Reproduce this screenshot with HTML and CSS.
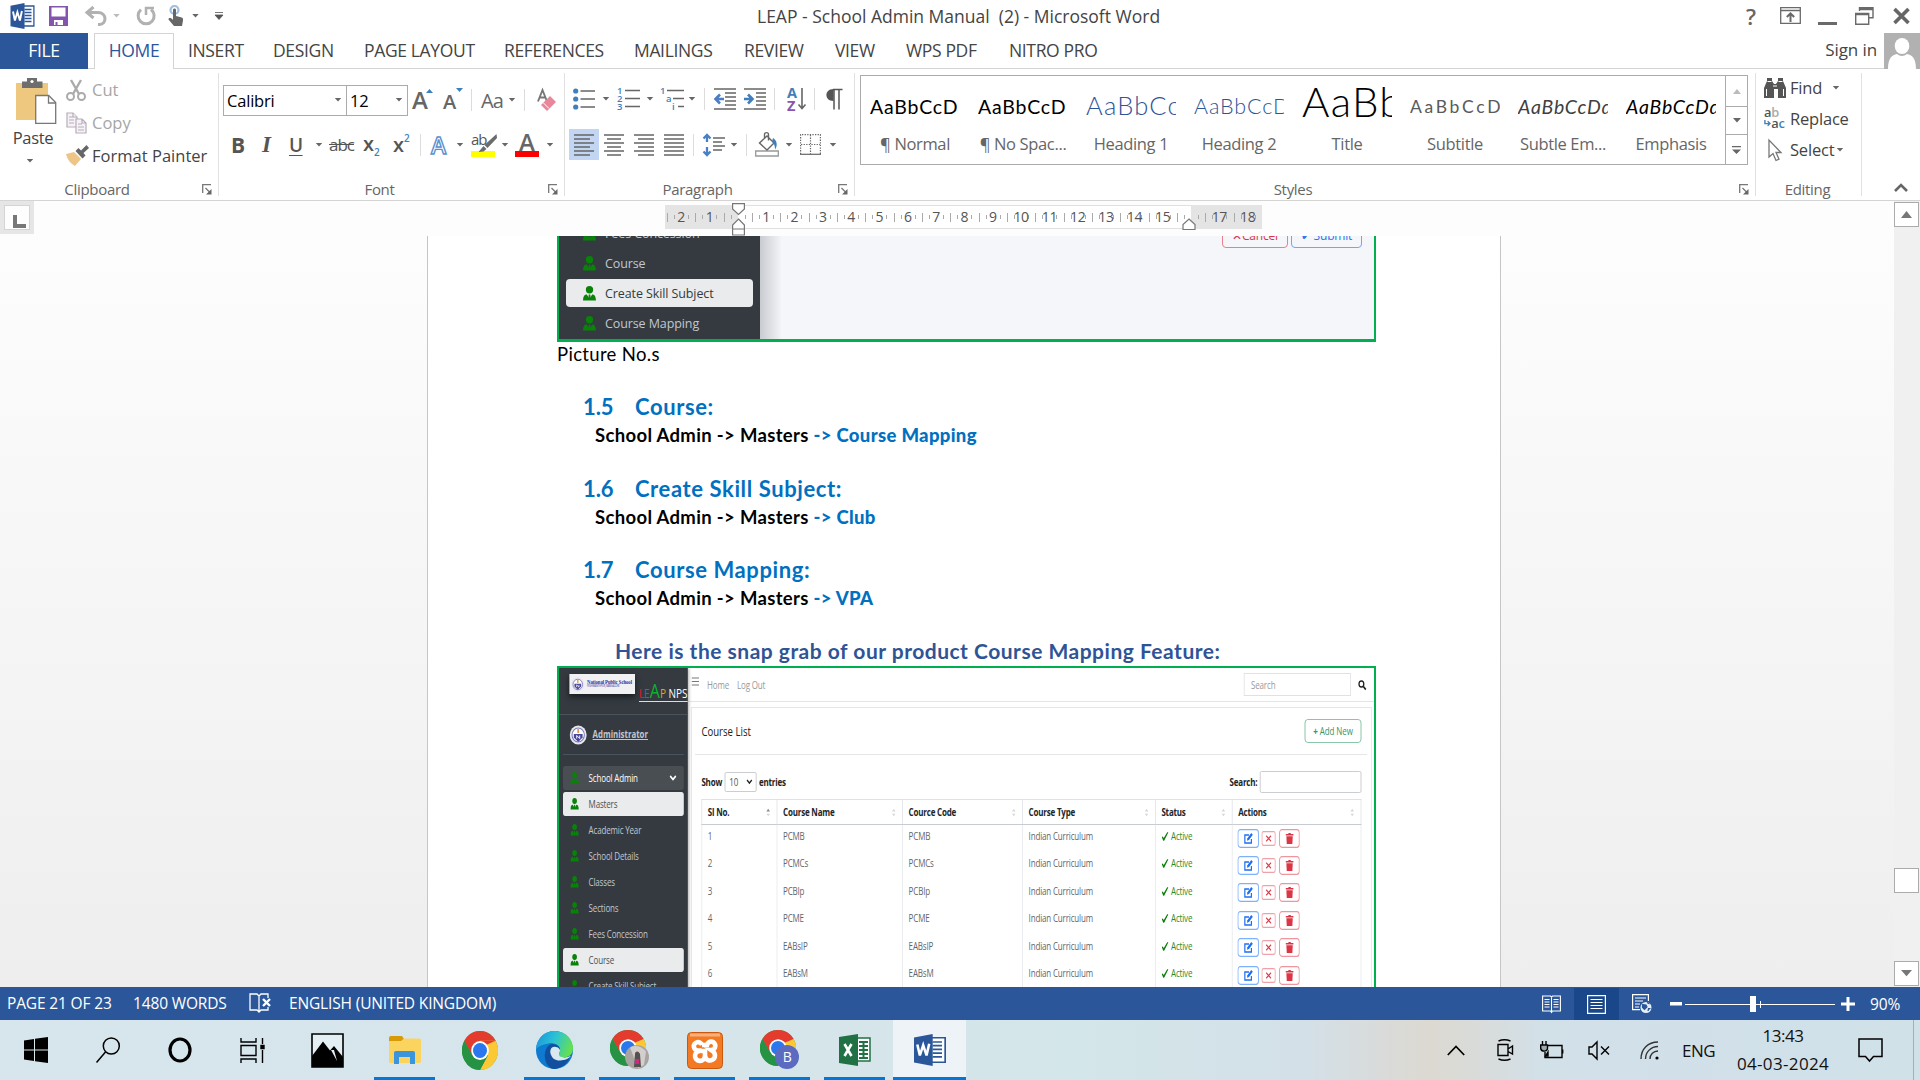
FILE: index.html
```html
<!DOCTYPE html>
<html lang="en">
<head>
<meta charset="utf-8">
<title>LEAP - School Admin Manual (2) - Microsoft Word</title>
<link rel="stylesheet" href="styles.css">
</head>
<body>
<svg class="defs" width="0" height="0" aria-hidden="true">
  <symbol id="caret" viewBox="0 0 8 5"><path d="M0 0h8L4 4.5z"/></symbol>
  <symbol id="launch" viewBox="0 0 10 11"><path d="M.7 9V.7H9M3.5 4l4 4" fill="none" stroke="#777" stroke-width="1.3"/><path d="M9.5 5v5.500h-5.500z" fill="#666"/></symbol>
  <symbol id="user" viewBox="0 0 12 14"><circle cx="6" cy="3.500" r="3.400"/><path d="M0 13.500c0-4 1.500-5.500 3.500-5.500L6 12l2.500-4c2 0 3.500 1.500 3.500 5.500z"/><path d="M5.300 8h1.400l.6 4.500h-2.600z"/></symbol>
  <symbol id="sort" viewBox="0 0 6 12"><path d="M0 4.500 3 1l3 3.500zM0 7.500h6L3 11z"/></symbol>
  <symbol id="word" viewBox="0 0 24 26"><path d="M13 3h10.400v20H13z" fill="#fff" stroke="#2b579a" stroke-width="1.300"/><path d="M14 6.500h7M14 9.500h7M14 12.500h7M14 15.500h7M14 18.500h7" stroke="#2b579a" stroke-width="1.400"/><path d="M0 2.800 14 0v26L0 23.200z" fill="#2b579a"/><path d="m2.500 8.500 1.900 9 2.500-8.500 2.500 8.500 2-9.500" fill="none" stroke="#fff" stroke-width="1.900"/></symbol>
  <symbol id="chrome" viewBox="0 0 36 36"><circle cx="18" cy="18" r="18" fill="#34a046"/><path d="M2.400 9A18 18 0 0 1 33.600 9L18 18 10.200 22.500z" fill="#e33b2e"/><path d="M33.600 9A18 18 0 0 1 18 36L25.800 22.500 18 9z" fill="#fcc934"/><path d="M33.600 9H18l6 4z" fill="#e33b2e"/><path d="M2.400 9A18 18 0 0 0 18 36l7.800-13.500-15.600 0z" fill="#269344"/><circle cx="18" cy="18" r="8.800" fill="#fff"/><circle cx="18" cy="18" r="7" fill="#2b78ee"/></symbol>
  <symbol id="check" viewBox="0 0 10 10"><path d="M.5 5.500 2.200 5l1 2L8 .3l1.700-.1L3.800 9.800H2.600z" fill="#0a7d0a"/></symbol>
  <symbol id="edit" viewBox="0 0 27 19"><rect x=".7" y=".7" width="25.600" height="17.600" rx="3" fill="#fff" stroke="#7fb0fb" stroke-width="1.200"/><path d="M14.500 6H9.300v8h8.200v-4" fill="none" stroke="#1f6ff2" stroke-width="1.500"/><path d="m12 11.700.5-2.500L17.300 4l2 1.700-4.900 5.300z" fill="#1f6ff2"/></symbol>
  <symbol id="cross" viewBox="0 0 18 15"><rect x=".7" y=".7" width="16.600" height="13.600" rx="2" fill="#fff" stroke="#f0a0a8" stroke-width="1.200"/><path d="m6 4.700 6 5.600m0-5.600-6 5.600" stroke="#dc3545" stroke-width="1.200"/></symbol>
  <symbol id="trash" viewBox="0 0 26 19"><rect x=".7" y=".7" width="24.600" height="17.600" rx="3" fill="#fff" stroke="#ee959e" stroke-width="1.200"/><path d="M8.500 5h3l.5-1h2.500l.5 1h3v1.500h-9.500zM9.200 7.200h8l-.5 7.800H9.700z" fill="#dc3545"/></symbol>
  <symbol id="crest" viewBox="0 0 20 20"><circle cx="10" cy="10" r="9.600" fill="#e9e7ee"/><circle cx="10" cy="10" r="7" fill="#fff" stroke="#7b78b8" stroke-width="1.200"/><path d="M5 9h10v3.500L10 17l-5-4.500z" fill="#4a489e"/><path d="M10 4v4" stroke="#d99b4a" stroke-width="2"/><path d="M8.300 13.500v-3l3.400 3v-3" fill="none" stroke="#fff"/></symbol>
</svg>

<header class="titlebar">
  <div class="quick">
    <svg width="25" height="26"><use href="#word"/></svg>
    <svg width="19" height="20" viewBox="0 0 19 20"><path d="M0 0h19v20H0z" fill="#8455ad"/><path d="M2.500 1.500h14v9h-14z" fill="#fff"/><path d="M5 14h9v5H5z" fill="#fff"/><path d="M6.500 16h2v3h-2z" fill="#8455ad"/></svg>
    <svg width="22" height="20" viewBox="0 0 22 20" fill="none" stroke="#b1b1b1" stroke-width="3"><path d="M8.500 1 2 6.500l6.500 5.500M3 6.500h10c9 0 9 12 1.500 12h-1.500"/></svg>
    <svg class="pale" width="7" height="4"><use href="#caret"/></svg>
    <svg width="20" height="20" viewBox="0 0 20 20" fill="none" stroke="#b1b1b1" stroke-width="3"><path d="M15 3.500a8 8 0 1 1-10 .2"/><path d="M10 9V2h8" stroke-width="2.500"/></svg>
    <svg width="16" height="22" viewBox="0 0 16 22"><circle cx="6.500" cy="5" r="4" fill="none" stroke="#9dbfe0" stroke-width="2.200"/><path d="M5 5c0-2 3-2 3 0v6l5 1.200c2 .5 2.300 1.500 2 3.300l-1 5.500H6l-5.500-6.500c0-2 2.500-2 4.500.5z" fill="#666"/></svg>
    <svg class="dark" width="7" height="4"><use href="#caret"/></svg>
    <svg width="8" height="8" viewBox="0 0 8 8"><path d="M0 .5h8M0 3h8L4 7.500z" fill="#555" stroke="#555" stroke-width=".8"/></svg>
  </div>
  <h1 class="wintitle">LEAP - School Admin Manual&nbsp; (2) - Microsoft Word</h1>
  <div class="winbtns">
    <span class="help">?</span>
    <svg width="21" height="17" viewBox="0 0 21 17" fill="none" stroke="#6a6a6a" stroke-width="1.300"><path d="M.7.7h19.600v15.600H.7zM.7 3.500h19.600"/><path d="M10.500 15V7M6.800 10l3.700-3.500 3.700 3.500" stroke-width="2"/></svg>
    <svg width="19" height="20"><path d="M0 16h19v3H0z" fill="#6a6a6a"/></svg>
    <svg width="19" height="18" viewBox="0 0 19 18" fill="none" stroke="#6a6a6a" stroke-width="1.400"><path d="M4.500 4V.8h13.500v10H14"/><path d="M4.500 2h13.500" stroke-width="2.500"/><path d="M.7 6.500h13v10.700H.7zM.7 7.500h13"/></svg>
    <svg width="17" height="16" viewBox="0 0 17 16"><path d="m1.500 1 14 14m0-14-14 14" stroke="#666" stroke-width="3.600"/></svg>
  </div>
</header>

<nav class="tabs">
  <span class="file">FILE</span>
  <span class="home">HOME</span>
  <div class="tablist"><span>INSERT</span><span>DESIGN</span><span>PAGE LAYOUT</span><span>REFERENCES</span><span>MAILINGS</span><span>REVIEW</span><span>VIEW</span><span>WPS PDF</span><span>NITRO PRO</span></div>
  <span class="signin">Sign in</span>
  <svg class="avatar" width="36" height="36" viewBox="0 0 36 36"><path d="M0 0h36v36H0z" fill="#b1b1b1"/><ellipse cx="18" cy="13" rx="7.300" ry="8" fill="#fff"/><path d="M4 36c0-11 4-14 9-15 3 2.500 7 2.500 10 0 5 1 9 4 9 15z" fill="#fff"/></svg>
</nav>

<section class="ribbon">
  <div class="group clip">
    <div class="clipbody">
      <div class="paste">
        <svg width="42" height="46" viewBox="0 0 42 46"><path d="M1 5h32v37H1z" fill="#eec87f"/><path d="M7 3.500h5V0h10v3.500h5.500V10H7z" fill="#6e6e6e"/><circle cx="17" cy="3.500" r="1.600" fill="#fff"/><path d="M20.700 17.500h13l7 7v20.800h-20z" fill="#fff" stroke="#777" stroke-width="1.300"/><path d="M33.500 17.500v7.500h7" fill="none" stroke="#777" stroke-width="1.300"/></svg>
        <span>Paste</span>
        <svg class="car" width="8" height="4"><use href="#caret"/></svg>
      </div>
      <div class="cliplist">
        <span class="off"><svg width="21" height="22" viewBox="0 0 21 22" fill="none" stroke="#ababab" stroke-width="2"><path d="m5 1 8 14M15 1 7 15" stroke-width="2.400"/><circle cx="4.500" cy="17.500" r="3.500"/><circle cx="15.500" cy="17.500" r="3.500"/></svg>Cut</span>
        <span class="off"><svg width="21" height="22" viewBox="0 0 21 22" fill="#f7f2f9" stroke="#b5adb5" stroke-width="1.200"><path d="M1 1h6l4 4v10H1z"/><path d="M10 7h6l4 4v10H10zM3 5h4M3 8h5M3 11h5M12 12h4M12 15h6M12 18h6M7 1v4h4M16 7v4h4"/></svg>Copy</span>
        <span><svg width="23" height="22" viewBox="0 0 23 22"><path d="M0 9 8 7l7 7-6 7C5 19 1 14 0 9z" fill="#eec587"/><path d="m9.500 6 3-3 2.500 2.500L20.500 0 23 3l-5.500 5 2 2.500-3 3z" fill="#666"/></svg>Format Painter</span>
      </div>
    </div>
    <div class="label"><span>Clipboard</span><svg width="10" height="11"><use href="#launch"/></svg></div>
  </div>

  <div class="group font">
    <div class="fontrow1">
      <span class="combo">Calibri<svg width="8" height="4"><use href="#caret"/></svg></span>
      <span class="combo size">12<svg width="8" height="4"><use href="#caret"/></svg></span>
      <span class="grow">A<svg width="7" height="4" viewBox="0 0 7 4"><path d="M0 4h7L3.500 0z" fill="#3f7fbb"/></svg></span>
      <span class="grow shrink">A<svg width="7" height="4" viewBox="0 0 7 4"><path d="M0 0h7L3.500 4z" fill="#3f7fbb"/></svg></span>
      <i class="sep"></i>
      <span class="case">Aa</span>
      <svg class="car" width="8" height="4"><use href="#caret"/></svg>
      <i class="sep"></i>
      <svg width="20" height="24" viewBox="0 0 20 24"><path d="M1 13.500 5.500 2 10 13.500M3 9.500h5" fill="none" stroke="#777" stroke-width="1.900"/><path d="m4 17 9-9 6 6-9 9z" fill="#e8879a"/><path d="m6 14.500 6 6" stroke="#fff"/></svg>
    </div>
    <div class="fontrow2">
      <b class="fb">B</b><i class="fi">I</i><b class="fu">U</b>
      <svg class="car" width="8" height="4"><use href="#caret"/></svg>
      <span class="strike">abc</span>
      <span class="scr">x<small>2</small></span>
      <span class="scr sup">x<small>2</small></span>
      <i class="sep"></i>
      <span class="outline">A</span>
      <svg class="car" width="8" height="4"><use href="#caret"/></svg>
      <span class="mark"><em>ab</em><svg width="19" height="20" viewBox="0 0 19 20"><path d="M18.500 0 19 4 9.500 14l-3-3zM5.500 12l3 3-3 2.500-5 .5z" fill="#6b6b6b"/></svg></span>
      <svg class="car" width="8" height="4"><use href="#caret"/></svg>
      <span class="colour">A</span>
      <svg class="car" width="8" height="4"><use href="#caret"/></svg>
    </div>
    <div class="label"><span>Font</span><svg width="10" height="11"><use href="#launch"/></svg></div>
  </div>

  <div class="group para">
    <div class="pararow1">
      <svg width="22" height="23" viewBox="0 0 22 23"><g fill="#3f7fbb"><circle cx="2.700" cy="3" r="2.600"/><circle cx="2.700" cy="11" r="2.600"/><circle cx="2.700" cy="19" r="2.600"/></g><path d="M7.500 3H22M7.500 11H22M7.500 19H22" stroke="#666" stroke-width="1.300"/></svg>
      <svg class="car" width="8" height="4"><use href="#caret"/></svg>
      <svg width="23" height="24" viewBox="0 0 23 24"><path d="M8 3.500h15M8 11.500h15M8 19.500h15" stroke="#666" stroke-width="1.300"/><g class="digits"><text x="0" y="7">1</text><text x="0" y="15">2</text><text x="0" y="23">3</text></g></svg>
      <svg class="car" width="8" height="4"><use href="#caret"/></svg>
      <svg width="23" height="24" viewBox="0 0 23 24"><path d="M6 3.500h17M12 11.500h11M17 19.500h6" stroke="#666" stroke-width="1.300"/><g class="digits"><text x="-1" y="7">1</text><text x="5" y="15">a</text><text x="11" y="23">i</text></g></svg>
      <svg class="car" width="8" height="4"><use href="#caret"/></svg>
      <i class="sep"></i>
      <svg width="22" height="22" viewBox="0 0 22 22"><path d="M0 1h22M11 5h11M11 9h11M11 13h11M11 17h11M0 21h22" stroke="#666" stroke-width="1.300"/><path d="M10 11H2M6 6.500 1.500 11 6 15.500" fill="none" stroke="#4a7fc4" stroke-width="2.600"/></svg>
      <svg width="22" height="22" viewBox="0 0 22 22"><path d="M0 1h22M12 5h10M12 9h10M12 13h10M12 17h10M0 21h22" stroke="#666" stroke-width="1.300"/><path d="M0 11h8M4 6.500 8.500 11 4 15.500" fill="none" stroke="#3f7fbb" stroke-width="2.600"/></svg>
      <i class="sep"></i>
      <svg width="20" height="26" viewBox="0 0 20 26"><text class="az" x="0" y="12" fill="#3f7fbb">A</text><text class="az" x="0" y="25" fill="#8a55ad">Z</text><path d="M15 2v20M11.500 18.500 15 22.500l3.500-4" fill="none" stroke="#666" stroke-width="1.600"/></svg>
      <i class="sep"></i>
      <svg width="17" height="21" viewBox="0 0 17 21"><path d="M7 .5h9.500M8 0v20.500M13 0v20.500" stroke="#555" stroke-width="1.500"/><path d="M7.500 0v12C-2 12-2 0 7.500 0z" fill="#555"/></svg>
    </div>
    <div class="pararow2">
      <span class="pressed"><svg width="20" height="22" viewBox="0 0 20 22"><path d="M0 1h20M0 5h16M0 9h20M0 13h16M0 17h20M0 21h16"/></svg></span>
      <svg class="ln" width="20" height="22" viewBox="0 0 20 22"><path d="M0 1h20M3 5h14M0 9h20M3 13h14M0 17h20M3 21h14"/></svg>
      <svg class="ln" width="20" height="22" viewBox="0 0 20 22"><path d="M0 1h20M4 5h16M0 9h20M4 13h16M0 17h20M4 21h16"/></svg>
      <svg class="ln" width="20" height="22" viewBox="0 0 20 22"><path d="M0 1h20M0 5h20M0 9h20M0 13h20M0 17h20M0 21h20"/></svg>
      <i class="sep"></i>
      <svg width="22" height="24" viewBox="0 0 22 24"><path d="M4 2v7M0.500 5.500 4 2l3.500 3.500M4 14v8M.5 18.500 4 22l3.500-3.500" fill="none" stroke="#4a7fc4" stroke-width="2.300"/><path d="M10 5h12M10 9h9M10 13h12M10 17h9" stroke="#666" stroke-width="1.300"/></svg>
      <svg class="car" width="8" height="4"><use href="#caret"/></svg>
      <i class="sep"></i>
      <svg width="24" height="25" viewBox="0 0 24 25"><path d="M.7 19h22.600v5H.7z" fill="#fff" stroke="#999" stroke-width="1.300"/><path d="m12 4 7 7-7 7-7.500-7zM9.500 7V2.500c0-2.500 4-2.500 4 0v6" fill="none" stroke="#666" stroke-width="1.400"/><path d="M18 6c4 2 5 8 2 11.500 0-4-1-6-3-8z" fill="#3f7fbb"/></svg>
      <svg class="car" width="8" height="4"><use href="#caret"/></svg>
      <svg width="21" height="21" viewBox="0 0 21 21" fill="none" stroke="#666" stroke-width="1.200"><path d="M.6 20V.6h19.800V20M10.500 1v19M1 10.500h19" stroke-dasharray="1.300 1.300"/><path d="M0 20.300h21"/></svg>
      <svg class="car" width="8" height="4"><use href="#caret"/></svg>
    </div>
    <div class="label"><span>Paragraph</span><svg width="10" height="11"><use href="#launch"/></svg></div>
  </div>

  <div class="group styles">
    <div class="gallery">
      <div class="cell"><span class="sample">AaBbCcD</span><span>¶ Normal</span></div>
      <div class="cell"><span class="sample">AaBbCcD</span><span>¶ No Spac...</span></div>
      <div class="cell"><span class="sample h1s">AaBbCc</span><span>Heading 1</span></div>
      <div class="cell"><span class="sample h2s">AaBbCcD</span><span>Heading 2</span></div>
      <div class="cell"><span class="sample ts">AaBb</span><span>Title</span></div>
      <div class="cell"><span class="sample ss">AaBbCcD</span><span>Subtitle</span></div>
      <div class="cell"><span class="sample se">AaBbCcDd</span><span>Subtle Em...</span></div>
      <div class="cell"><span class="sample em">AaBbCcDd</span><span>Emphasis</span></div>
      <div class="updown">
        <span class="pale"><svg width="8" height="5" viewBox="0 0 8 5"><path d="M0 5h8L4 0z"/></svg></span>
        <span><svg width="8" height="5"><use href="#caret"/></svg></span>
        <span><svg width="9" height="8" viewBox="0 0 9 8"><path d="M0 0h9v1.300H0zM0 3.500h9L4.500 8z"/></svg></span>
      </div>
    </div>
    <div class="label"><span>Styles</span><svg width="10" height="11"><use href="#launch"/></svg></div>
  </div>

  <div class="group editing">
    <div class="editlist">
      <span><svg width="22" height="20" viewBox="0 0 22 20"><path d="M3 3V0h5v3l2 3h2l2-3V0h5v3l3 7v10h-8v-9h-4v9H0V10z" fill="#555"/><path d="M3.500 3.500h4M14.500 3.500h4M2.500 11v7M19.500 11v7M9 8h4" stroke="#fff"/></svg>Find<svg class="car" width="8" height="4"><use href="#caret"/></svg></span>
      <span><svg width="24" height="26" viewBox="0 0 24 26"><g class="rep"><text x="0" y="11">a<tspan fill="#aaa">b</tspan></text><text x="8" y="23">a<tspan fill="#3f7fbb">c</tspan></text></g><path d="M1 14v4h5M4 15.500 6.500 18 4 20.500" fill="none" stroke="#3f7fbb" stroke-width="1.500"/></svg>Replace</span>
      <span><svg width="22" height="22" viewBox="0 0 22 22"><path d="M5 1v17l4-3.500 3 7 3-1.300-3-6.700h5z" fill="#fff" stroke="#777" stroke-width="1.300"/></svg>Select<svg class="car near" width="8" height="4"><use href="#caret"/></svg></span>
    </div>
    <div class="label"><span>Editing</span></div>
  </div>
  <svg class="collapse" width="14" height="9" viewBox="0 0 14 9"><path d="m1 8 6-6 6 6" fill="none" stroke="#666" stroke-width="2.600"/></svg>
</section>

<div class="workspace">
  <div class="stage">
    <div class="rulerbar">
      <div class="tabstop"><span></span></div>
      <div class="ruler">
        <div class="margin l"><span>2</span><span>1</span><span class="half"></span></div>
        <div class="body"><span class="half r"></span><span>1</span><span>2</span><span>3</span><span>4</span><span>5</span><span>6</span><span>7</span><span>8</span><span>9</span><span>10</span><span>11</span><span>12</span><span>13</span><span>14</span><span>15</span><span class="half"></span></div>
        <div class="margin"><span class="half r"></span><span>17</span><span>18</span></div>
        <svg class="indent" width="13" height="33" viewBox="0 0 13 33" fill="#fff" stroke="#777" stroke-width="1.200"><path d="M.6.6h11.800v5.400L6.500 11.500.6 6zM6.500 16l5.900 6v10H.6V22zM.6 26h11.800"/></svg>
        <svg class="indent right" width="14" height="12" viewBox="0 0 14 12" fill="#fff" stroke="#777" stroke-width="1.200"><path d="m7 1 6 5.500v5H1v-5z"/></svg>
      </div>
    </div>
    <main class="desk">
      <article class="page">
        <div class="shot first">
          <aside class="side1">
            <span><svg width="13" height="15"><use href="#user"/></svg>Fees Concession</span>
            <span><svg width="13" height="15"><use href="#user"/></svg>Course</span>
            <span class="on"><svg width="13" height="15"><use href="#user"/></svg>Create Skill Subject</span>
            <span><svg width="13" height="15"><use href="#user"/></svg>Course Mapping</span>
          </aside>
          <div class="pane1"><span class="btn red">✕Cancel</span><span class="btn blue">✔ Submit</span></div>
        </div>
        <p class="pic">Picture No.s</p>
        <h2><span>1.5</span>Course:</h2>
        <p class="path">School Admin -&gt; Masters <b>-&gt; Course Mapping</b></p>
        <h2><span>1.6</span>Create Skill Subject:</h2>
        <p class="path">School Admin -&gt; Masters <b>-&gt; Club</b></p>
        <h2><span>1.7</span>Course Mapping:</h2>
        <p class="path">School Admin -&gt; Masters <b>-&gt; VPA</b></p>
        <h3>Here is the snap grab of our product Course Mapping Feature:</h3>
        <div class="shot second">
          <div class="app">
            <aside class="side2">
              <div class="brand">
                <div class="logo"><svg width="17" height="15" viewBox="0 0 20 20" preserveAspectRatio="none"><use href="#crest"/></svg><div><b>National Public School</b><small>YESHWANTHPUR, BANGALORE</small></div></div>
                <div class="leap"><i class="c1">L</i><i class="c2">E</i><i class="c3">A</i><i class="c4">P</i> NPS</div>
              </div>
              <div class="admin"><svg width="22" height="20" viewBox="0 0 20 20" preserveAspectRatio="none"><use href="#crest"/></svg><b>Administrator</b></div>
              <div class="menu">
                <span class="top"><svg width="11" height="12"><use href="#user"/></svg>School Admin<svg class="chev" width="9" height="6" viewBox="0 0 9 6"><path d="m1 1 3.500 3.500L8 1" fill="none" stroke="#fff" stroke-width="1.800"/></svg></span>
                <span class="on"><svg width="11" height="12"><use href="#user"/></svg>Masters</span>
                <span><svg width="11" height="12"><use href="#user"/></svg>Academic Year</span>
                <span><svg width="11" height="12"><use href="#user"/></svg>School Details</span>
                <span><svg width="11" height="12"><use href="#user"/></svg>Classes</span>
                <span><svg width="11" height="12"><use href="#user"/></svg>Sections</span>
                <span><svg width="11" height="12"><use href="#user"/></svg>Fees Concession</span>
                <span class="on"><svg width="11" height="12"><use href="#user"/></svg>Course</span>
                <span><svg width="11" height="12"><use href="#user"/></svg>Create Skill Subject</span>
              </div>
            </aside>
            <div class="content">
              <div class="topnav"><svg width="9" height="9" viewBox="0 0 9 9"><path d="M0 1h9M0 4.500h9M0 8h9" stroke="#777" stroke-width="1.100"/></svg><span>Home</span><span>Log Out</span><div class="find">Search</div><svg width="10" height="10" viewBox="0 0 10 10"><circle cx="4" cy="4" r="3" fill="none" stroke="#222" stroke-width="1.600"/><path d="m6.300 6.300 3.200 3.200" stroke="#222" stroke-width="1.900"/></svg></div>
              <div class="card">
                <div class="cardhead"><span>Course List</span><span class="add"><b>+</b> Add New</span></div>
                <div class="tools"><b>Show</b><span class="num">10<svg width="8" height="6" viewBox="0 0 8 6"><path d="m1 1 3 3 3-3" fill="none" stroke="#222" stroke-width="1.600"/></svg></span><b>entries</b><b class="sl">Search:</b><span class="box"></span></div>
                <table>
                  <colgroup><col class="w1"><col class="w2"><col class="w3"><col class="w4"><col class="w5"><col class="w6"></colgroup>
                  <thead><tr>
                    <th><div>Sl No.<svg class="asc" width="5" height="9" viewBox="0 0 6 12"><path d="M0 4.500 3 1l3 3.500z"/><path d="M0 7.500h6L3 11z" fill="#d5d8db"/></svg></div></th>
                    <th><div>Course Name<svg width="5" height="9"><use href="#sort"/></svg></div></th>
                    <th><div>Cource Code<svg width="5" height="9"><use href="#sort"/></svg></div></th>
                    <th><div>Course Type<svg width="5" height="9"><use href="#sort"/></svg></div></th>
                    <th><div>Status<svg width="5" height="9"><use href="#sort"/></svg></div></th>
                    <th><div>Actions<svg width="5" height="9"><use href="#sort"/></svg></div></th>
                  </tr></thead>
                  <tbody>
                    <tr><td>1</td><td>PCMB</td><td>PCMB</td><td>Indian Curriculum</td><td class="ok"><svg width="9" height="9"><use href="#check"/></svg>Active</td><td><div class="acts"><svg width="27" height="19"><use href="#edit"/></svg><svg width="18" height="15"><use href="#cross"/></svg><svg width="26" height="19"><use href="#trash"/></svg></div></td></tr>
                    <tr><td>2</td><td>PCMCs</td><td>PCMCs</td><td>Indian Curriculum</td><td class="ok"><svg width="9" height="9"><use href="#check"/></svg>Active</td><td><div class="acts"><svg width="27" height="19"><use href="#edit"/></svg><svg width="18" height="15"><use href="#cross"/></svg><svg width="26" height="19"><use href="#trash"/></svg></div></td></tr>
                    <tr><td>3</td><td>PCBIp</td><td>PCBIp</td><td>Indian Curriculum</td><td class="ok"><svg width="9" height="9"><use href="#check"/></svg>Active</td><td><div class="acts"><svg width="27" height="19"><use href="#edit"/></svg><svg width="18" height="15"><use href="#cross"/></svg><svg width="26" height="19"><use href="#trash"/></svg></div></td></tr>
                    <tr><td>4</td><td>PCME</td><td>PCME</td><td>Indian Curriculum</td><td class="ok"><svg width="9" height="9"><use href="#check"/></svg>Active</td><td><div class="acts"><svg width="27" height="19"><use href="#edit"/></svg><svg width="18" height="15"><use href="#cross"/></svg><svg width="26" height="19"><use href="#trash"/></svg></div></td></tr>
                    <tr><td>5</td><td>EABsIP</td><td>EABsIP</td><td>Indian Curriculum</td><td class="ok"><svg width="9" height="9"><use href="#check"/></svg>Active</td><td><div class="acts"><svg width="27" height="19"><use href="#edit"/></svg><svg width="18" height="15"><use href="#cross"/></svg><svg width="26" height="19"><use href="#trash"/></svg></div></td></tr>
                    <tr><td>6</td><td>EABsM</td><td>EABsM</td><td>Indian Curriculum</td><td class="ok"><svg width="9" height="9"><use href="#check"/></svg>Active</td><td><div class="acts"><svg width="27" height="19"><use href="#edit"/></svg><svg width="18" height="15"><use href="#cross"/></svg><svg width="26" height="19"><use href="#trash"/></svg></div></td></tr>
                  </tbody>
                </table>
              </div>
            </div>
          </div>
        </div>
      </article>
    </main>
  </div>
  <div class="scroll">
    <span class="sb"><svg width="11" height="7" viewBox="0 0 8 5"><path d="M0 5h8L4 0z"/></svg></span>
    <span class="thumb"></span>
    <span class="sb"><svg width="11" height="7"><use href="#caret"/></svg></span>
  </div>
</div>

<footer class="status">
  <div class="stleft">
    <span>PAGE 21 OF 23</span><span>1480 WORDS</span>
    <svg width="22" height="20" viewBox="0 0 22 20"><path d="M10 18V3L8 1H1v16h7l2 2 2-2h7v-3M10 3l2-2h7v4" fill="none" stroke="#fff" stroke-width="1.300"/><path d="m14 6 7 7m0-7-7 7" stroke="#fff" stroke-width="2.400"/></svg>
    <span>ENGLISH (UNITED KINGDOM)</span>
  </div>
  <div class="views">
    <svg width="19" height="19" viewBox="0 0 19 19" fill="none" stroke="#fff" stroke-width="1.100"><path d="M.6 1h7.900l1 1 1-1h7.900v15h-7.900l-1 1.500-1-1.500H.6zM9.500 2v15M2.500 4.500h5M2.500 7h5M2.500 9.500h5M2.500 12h5M11.500 4.500h5M11.500 7h5M11.500 9.500h5M11.500 12h5"/></svg>
    <span class="cur"><svg width="19" height="19" viewBox="0 0 19 19" fill="none" stroke="#fff" stroke-width="1.200"><path d="M.6.6h17.800v17.800H.6zM3.500 4.500h12M3.500 7.500h12M3.500 10.500h12M3.500 13.500h12"/></svg></span>
    <svg width="20" height="20" viewBox="0 0 20 20" fill="none" stroke="#fff" stroke-width="1.200"><path d="M16.400 7V.6H.6v15H8M3 4h11M3 7h8M3 10h5M3 13h4"/><circle cx="14" cy="13.500" r="5.500" fill="#e8eef7" stroke="none"/><path d="m10.500 10.500 3.500.5 1 2-2.500 2.500-2-2zM16 17l.5-2.500h2M15 8.500l2.500 1.500" fill="#2b579a" stroke="#2b579a"/></svg>
    <svg width="12" height="4"><path d="M0 0h12v3.500H0z" fill="#fff"/></svg>
    <div class="track"><i></i></div>
    <svg width="14" height="14"><path d="M5.500 0h3v5.500H14v3H8.500V14h-3V8.500H0v-3h5.500z" fill="#fff"/></svg>
    <span>90%</span>
  </div>
</footer>

<div class="taskbar">
  <div class="apps">
    <span><svg width="24" height="26" viewBox="0 0 24 26"><path d="M0 3.500 10 2v10.500H0zM11 1.800 24 0v12.500H11zM0 13.500h10V24L0 22.500zM11 13.500h13V26l-13-1.800z"/></svg></span>
    <span><svg width="24" height="26" viewBox="0 0 24 26" fill="none" stroke="#000" stroke-width="1.500"><circle cx="15.300" cy="9" r="8"/><path d="m9.500 15-9 10.500"/></svg></span>
    <span><svg width="26" height="26" viewBox="0 0 26 26"><ellipse cx="13" cy="13" rx="10" ry="11" fill="none" stroke="#000" stroke-width="3.200"/></svg></span>
    <span><svg width="25" height="25" viewBox="0 0 25 25" fill="none" stroke="#000" stroke-width="1.400"><path d="M1 0v4h15V0M1 25v-4h15v4M1 7.500h15v10H1zM22.500 0v6M22.500 12v13"/><path d="M21 7.500h3v3h-3z" fill="#000"/></svg></span>
    <span><svg width="33" height="35" viewBox="0 0 33 35"><path d="M1 1h31v33H1z" fill="#e4eff3" stroke="#000" stroke-width="1.600"/><path d="M1 23 12 8.500l7 9 4-4.500 9 11v10H1z"/><path d="m20 17 6 11-3-11z" fill="#e4eff3"/></svg></span>
    <span class="run"><svg width="32" height="28" viewBox="0 0 32 28"><path d="M0 2c0-1 .5-2 2-2h11l2 3v4H0z" fill="#d89a06"/><path d="M0 5h12l3-2.500h15c1.500 0 2 1 2 2V25c0 1-.6 2-2 2H2c-1.400 0-2-1-2-2z" fill="#fbd35f"/><path d="M5 28V17c0-1.300.7-2 2-2h17c1.300 0 2 .7 2 2v11h-5v-7H10v7z" fill="#3a95dd"/></svg></span>
    <span><svg width="36" height="39" viewBox="0 0 36 36" preserveAspectRatio="none"><use href="#chrome"/></svg></span>
    <span class="run"><svg width="37" height="38" viewBox="0 0 36 36" preserveAspectRatio="none"><defs><linearGradient id="eg" x1="0" y1=".2" x2="1" y2=".5"><stop offset="0" stop-color="#1a95dc"/><stop offset=".5" stop-color="#2cc3d5"/><stop offset="1" stop-color="#66e04f"/></linearGradient></defs><circle cx="18" cy="18" r="18" fill="#0d7bd0"/><path d="M0 17C1 6 9 0 18 0c11 0 18 8 18 16 0 7-5 9-9 9-5 0-6-2-4-4 3-8-7-11-12-9C5 13 2 15 0 17z" fill="url(#eg)"/><path d="M12 14c3-3 9-2 11 2 1 2 0 3-1 5-1 2 0 4 5 4 3 0 5-.6 7-2-2 7-9 13-17 13C8 34 6 20 12 14z" fill="#134f9f"/><path d="M15 16c4-3 10 1 8 4-2 4 1 5 5 5 2 0 4-.5 6-1.500C31 28 20 30 16 25c-2-3-3-6-1-9z" fill="#d9e8ef"/></svg></span>
    <span class="run"><svg width="40" height="40" viewBox="0 0 40 40"><use href="#chrome" width="36" height="36"/><circle cx="27" cy="27" r="12" fill="#a9a4a2"/><path d="M20 17.500c6-3 12-1 16 4L34 35l-6 3z" fill="#d2cfcd"/><path d="M25 24c0-3.500 4-3.500 5 0l1 13h-7z" fill="#55504f"/><path d="M25 29h4v5h-4z" fill="#d22780"/></svg></span>
    <span class="run"><svg width="36" height="37" viewBox="0 0 36 37"><rect x=".5" y=".5" width="35" height="36" rx="4" fill="#f37a22" stroke="#c8590f"/><path d="M3 3h30" stroke="#f8b07a" stroke-width="3"/><g fill="none" stroke="#fff" stroke-width="4.600"><path d="M14 19a5 5 0 1 0 4 5v-5h-4M14.500 18.500H11a4.200 4.200 0 1 1 4-5.500"/><path d="M18 24a5 5 0 1 0 8-4.500l-2-1.500a4.200 4.200 0 1 0-4-5l-5 0"/></g></svg></span>
    <span class="run"><svg width="40" height="40" viewBox="0 0 40 40"><use href="#chrome" width="36" height="36"/><circle cx="27" cy="27" r="12" fill="#5c6bc0"/><text class="badge" x="27" y="32" text-anchor="middle">B</text></svg></span>
    <span class="run"><svg width="32" height="32" viewBox="0 0 32 32"><path d="M18 4h13v23H18z" fill="#fff" stroke="#207245" stroke-width="1.500"/><path d="M20 8h9M20 12h9M20 16h9M20 20h9M20 24h9M24.500 7v18" stroke="#207245" stroke-width="2"/><path d="M0 3 19 0v32L0 29z" fill="#207245"/><path d="m5.500 10 7 12m0-12-7 12" stroke="#fff" stroke-width="2.600"/></svg></span>
    <span class="run active"><svg width="32" height="32" viewBox="0 0 24 26" preserveAspectRatio="none"><use href="#word"/></svg></span>
  </div>
  <div class="tray">
    <svg width="18" height="11" viewBox="0 0 18 11" fill="none" stroke="#000" stroke-width="1.700"><path d="m.8 10 8.200-8.500 8.200 8.500"/></svg>
    <svg width="17" height="22" viewBox="0 0 17 22" fill="none" stroke="#000" stroke-width="1.400"><path d="M1 5.500h10v11H1zM11 10l4.500-3v8L11 12.500M1.500 2c4-1.700 8-1.700 12 0M1.500 20c4 1.700 8 1.700 12 0"/></svg>
    <svg width="24" height="18" viewBox="0 0 24 18" fill="none" stroke="#000" stroke-width="1.400"><path d="M8 4.500h14v12H5V11M22.700 8.500v4M2.500 0v4M6 0v4"/><path d="M.7 4H7.500v3.500C7 11 1.500 11 .7 7.500zM8 11v4H5.500z" fill="#000" fill-opacity=".25"/></svg>
    <svg width="22" height="19" viewBox="0 0 22 19" fill="none" stroke="#000" stroke-width="1.400"><path d="M1 6h3l5-5v17l-5-5H1zM13 5.500l8 8M21 5.500l-8 8"/></svg>
    <svg width="19" height="19" viewBox="0 0 19 19" fill="none" stroke="#333" stroke-width="1.400"><path d="M1 18C1 8 8 1 18 1M5.500 18C5.500 11 11 5.500 18 5.500M10 18c0-4.500 3.500-8 8-8"/><circle cx="17" cy="17" r="1.600" fill="#000" stroke="none"/></svg>
    <span class="eng">ENG</span>
    <div class="clock"><span>13:43</span><span class="date">04-03-2024</span></div>
    <svg width="25" height="25" viewBox="0 0 25 25" fill="none" stroke="#000" stroke-width="1.500"><path d="M1 1h23v17.500H15.500l-4 4.500-4-4.500H1z"/></svg>
    <i class="peek"></i>
  </div>
</div>
</body>
</html>
```
FILE: styles.css
```css
* { box-sizing: border-box; }
body { margin: 0; width: 1920px; height: 1080px; overflow: hidden; display: flex; flex-direction: column; background: #fdfdfd; color: #444; font-family: "Open Sans", "Noto Sans", sans-serif; font-size: 16.5px; letter-spacing: -.5px; }
h1, h2, h3, p { margin: 0; font-weight: 400; white-space: nowrap; }
svg { display: block; flex: none; overflow: visible; }
.defs { position: absolute; }
.car, .dark { fill: #666; }
.pale { fill: #bbb; }

/* title bar */
.titlebar { height: 33px; display: grid; grid-template-columns: 757px 989px 1fr; background: #fff; }
.quick { display: grid; grid-template-columns: 39px 36px 28px 23px 32px 24px 23px 20px; padding: 0 0 0 10px; align-items: center; align-content: center; height: 31px; }
.wintitle { font-size: 17.5px; line-height: 32px; letter-spacing: 0; }
.winbtns { display: grid; grid-template-columns: 34px 38px 37px 38px 20px; align-items: center; height: 31px; color: #666; }
.help { font-weight: 600; font-size: 22px; line-height: 28px; }

/* tabs */
.tabs { height: 36px; display: flex; border-bottom: 1px solid #d4d4d4; background: #fff; font-size: 17.5px; line-height: 34px; letter-spacing: -.35px; white-space: nowrap; }
.file { width: 88px; background: #2b579a; color: #fff; text-align: center; height: 36px; }
.home { width: 80px; margin-left: 6px; height: 36px; border: 1px solid #d4d4d4; border-bottom: 0; background: #fff; color: #2b579a; text-align: center; line-height: 33px; }
.tablist { display: grid; grid-template-columns: 85px 91px 140px 130px 110px 91px 71px 103px 120px; margin-left: 14px; }
.signin { margin-left: auto; font-size: 17px; letter-spacing: -.1px; padding-right: 7px; }

/* ribbon */
.ribbon { height: 132px; display: flex; background: #fff; border-bottom: 1px solid #d4d4d4; padding-top: 4px; }
.group { height: 123px; border-right: 1px solid #e1e1e1; display: flex; flex-direction: column; flex: none; white-space: nowrap; }
.clip { width: 219px; }
.font { width: 346px; }
.para { width: 290px; }
.styles { width: 901px; }
.editing { width: 106px; }
.collapse { margin: 110px 0 0 32px; }
.label { margin-top: auto; height: 18px; margin-bottom: -2px; display: flex; align-items: center; justify-content: center; font-size: 15px; line-height: 18px; color: #666; letter-spacing: -.3px; padding-right: 6px; }
.label span { flex: 1; text-align: center; padding-right: 8px; }
.editing .label span { padding: 0 0 0 4px; }
.sep { width: 1px; height: 22px; background: #dcdcdc; }
.clipbody { display: flex; }
.paste { width: 66px; display: flex; flex-direction: column; align-items: center; padding-top: 5px; }
.paste > svg:first-child { margin-left: 6px; }
.paste span { line-height: 24px; margin-top: 2px; letter-spacing: -.3px; }
.paste .car { margin: 9px 6px 0 0; }
.cliplist span { display: grid; grid-template-columns: 26px 1fr; height: 33px; align-items: center; font-size: 16.5px; letter-spacing: .02px; }
.cliplist .off { color: #a6a6a6; }

.fontrow1 { display: grid; grid-template-columns: 124px 65px 31px 28px 10px 27px 16px 13px 20px; padding: 11px 0 0 4px; align-items: center; height: 43px; }
.combo { width: 124px; height: 31px; border: 1px solid #ababab; display: flex; align-items: center; justify-content: space-between; padding: 0 4px 0 3px; color: #000; fill: #666; font-size: 16.500px; letter-spacing: -.2px; background: #fff; }
.combo.size { width: 62px; margin-left: -1px; }
.grow { font-weight: 600; font-size: 24px; line-height: 28px; color: #666; display: flex; letter-spacing: -2px; }
.grow svg { margin-top: 3px; }
.shrink { font-size: 20px; padding-top: 3px; }
.shrink svg { margin-top: 0; margin-left: 2px; }
.case { font-size: 20px; letter-spacing: -1px; color: #666; }
.fontrow2 { display: grid; grid-template-columns: 29px 29px 26px 14px 34px 30px 27px 11px 25px 15px 30px 14px 31px 10px; padding: 3px 0 0 12px; height: 54px; align-items: center; color: #555; }
.fb { font-size: 21px; }
.fi { font-family: "Liberation Serif", serif; font-weight: 700; font-size: 23px; padding-left: 2px; }
.fu { font-size: 19px; font-weight: 600; text-decoration: underline; text-underline-offset: 3px; }
.strike { font-size: 17px; text-decoration: line-through; letter-spacing: -1px; }
.scr { font-size: 20px; font-weight: 600; letter-spacing: 0; line-height: 24px; white-space: nowrap; }
.scr small { font-size: 10px; color: #3f7fbb; vertical-align: -5px; line-height: 1; }
.scr.sup small { vertical-align: 10px; }
.outline { font-size: 23px; line-height: 28px; font-weight: 600; color: #fff; -webkit-text-stroke: 1.4px #5b8fce; letter-spacing: 0; }
.mark { width: 24px; height: 24px; border-bottom: 6px solid #ff0; display: flex; align-items: flex-start; margin-top: 1px; }
.mark em { font-style: normal; font-size: 15px; line-height: 12px; letter-spacing: -1px; }
.mark svg { margin: 1px 0 0 -9px; }
.colour { width: 24px; height: 24px; border-bottom: 6px solid #f00; text-align: center; font-weight: 600; font-size: 24px; line-height: 17px; color: #666; margin-top: 1px; letter-spacing: 0; }

.pararow1 { display: grid; grid-template-columns: 29px 15px 29px 15px 27px 16px 10px 30px 30px 13px 27px 12px 20px; padding: 7px 0 0 8px; align-items: center; height: 45px; }
.pararow2 { display: grid; grid-template-columns: 35px 30px 30px 29px 10px 27px 16px 9px 30px 15px 29px 10px; padding-left: 4px; align-items: center; height: 50px; padding-top: 3px; }
.digits { font-size: 9.5px; font-weight: 600; fill: #3f7fbb; letter-spacing: 0; }
.az { font-size: 14.5px; font-weight: 700; letter-spacing: 0; }
.ln, .pressed svg { stroke: #666; stroke-width: 1.300; }
.pressed { background: #c2d5f2; width: 30px; height: 31px; padding: 5px; }

.gallery { margin: 2px 0 0 5px; width: 888px; height: 90px; border: 1px solid #ababab; display: flex; }
.cell { width: 108px; display: flex; flex-direction: column; align-items: center; color: #666; font-size: 16.500px; letter-spacing: -.35px; padding-top: 9px; flex: none; }
.sample { width: 90px; height: 39px; overflow: hidden; font-family: Lato, sans-serif; font-size: 19.500px; letter-spacing: .8px; line-height: 44px; color: #000; margin-bottom: 9px; }
.cell > span:last-child { line-height: 22px; }
.h1s { color: #2f5496; font-weight: 300; font-size: 25.500px; line-height: 41px; letter-spacing: 1.200px; }
.h2s { color: #2f5496; font-weight: 300; font-size: 21.500px; line-height: 43px; letter-spacing: .9px; }
.ts { font-weight: 300; font-size: 42px; line-height: 32px; letter-spacing: 1.200px; }
.ss { color: #5a5a5a; letter-spacing: 2.700px; font-size: 17.500px; }
.se { font-style: italic; color: #404040; }
.em { font-style: italic; }
.updown { margin-left: auto; width: 22px; display: grid; grid-template-rows: 31px 28px 29px; border-left: 1px solid #ababab; fill: #666; }
.updown span { display: flex; align-items: center; justify-content: center; border-bottom: 1px solid #ababab; }
.updown span:last-child { border: 0; }
.updown .pale { fill: #bbb; }
.editlist { margin-top: -1px; }
.editlist span { display: flex; align-items: center; height: 31px; padding-left: 8px; gap: 4px; font-size: 16.5px; letter-spacing: -.2px; }
.editlist span > svg:first-child { width: 22px; }
.editlist .car { margin-left: 6px; }
.editlist .near { margin-left: -2px; }
.rep { font-size: 14px; fill: #555; font-weight: 600; letter-spacing: -.3px; }

/* work area */
.workspace { height: 786px; display: flex; }
.stage { width: 1894px; display: flex; flex-direction: column; }
.rulerbar { height: 35px; display: flex; align-items: flex-start; background: #fdfdfd; flex: none; }
.tabstop { width: 34px; height: 33px; background: #e6e6e6; padding: 4px; flex: none; }
.tabstop span { display: block; height: 25px; background: #fdfdfd; border: 1px solid #d4d4d4; }
.tabstop span::after { content: ""; display: block; width: 9px; height: 9px; border: solid #777; border-width: 0 0 4px 4px; margin: 9px 0 0 8px; }
.ruler { display: flex; margin: 4px 0 0 631px; height: 24px; position: relative; font-size: 14px; line-height: 24px; color: #555; letter-spacing: -.3px; }
.margin, .body { display: flex; height: 24px; }
.margin { background: #e4e4e4; }
.margin.l { padding-left: 2px; }
.body { background: #fff; border: solid #e0e0e0; border-width: 1px 0; line-height: 22px; }
.ruler span { width: 28.330px; text-align: center; background: linear-gradient(#aaa, #aaa) 0 50%/1px 9px no-repeat, linear-gradient(#aaa, #aaa) 7px 50%/1px 4px no-repeat, linear-gradient(#aaa, #aaa) 21px 50%/1px 4px no-repeat; }
.ruler span.half { width: 14.160px; background-size: 1px 9px, 1px 4px, 0 0; }
.ruler span.r { background-size: 0 0, 1px 4px, 0 0; }
.indent { position: absolute; left: 67px; top: -2px; z-index: 2; }
.indent.right { left: 517px; top: 13px; }
.desk { flex: 1; overflow: hidden; background: linear-gradient(#fdfdfd, #eee); display: flex; }
.page { margin-left: 427px; width: 1074px; height: 751px; border: solid #c6c6c6; border-width: 0 1px; background: #fff; padding-left: 129px; font-family: Lato, sans-serif; color: #000; overflow: hidden; flex: none; }
.pic { font-size: 18.500px; height: 24px; line-height: 24px; letter-spacing: .33px; }
.page h2 { font-weight: 700; color: #0070c0; font-size: 22px; line-height: 28px; height: 28px; margin: 24.600px 0 0 26px; letter-spacing: .6px; display: flex; }
.pic + h2 { margin-top: 27px; }
.page h2 span { width: 52px; letter-spacing: -.1px; }
.path { font-size: 18.500px; font-weight: 700; line-height: 29px; height: 29px; margin-left: 38px; letter-spacing: .33px; }
.path b { color: #0070c0; }
.page h3 { font-weight: 700; color: #2f5496; font-size: 21px; line-height: 27px; height: 27px; margin: 24px 0 2px 58px; letter-spacing: .5px; }
.shot { width: 819px; border: 2px solid #00b050; overflow: hidden; font-family: "Open Sans", sans-serif; }
.first { height: 106px; border-top: 0; border-bottom-width: 3px; display: flex; background: #f4f6f9; }
.side1 { width: 201px; background: #343a40; color: #c2c7d0; padding: 0 7px; font-size: 12.500px; letter-spacing: -.1px; margin-top: -17px; flex: none; }
.side1 span { display: flex; align-items: center; gap: 9px; height: 28px; padding-left: 17px; margin-bottom: 2px; border-radius: 4px; fill: #088208; }
.side1 .on { background: #e9ebec; color: #343a40; }
.pane1 { flex: 1; display: flex; justify-content: flex-end; gap: 3px; padding-right: 12px; background: linear-gradient(90deg, #c8cbd0, #f4f6f9 22px); }
.btn { height: 32px; margin-top: -20px; border: 1px solid; border-radius: 4px; font-size: 12px; line-height: 38px; text-align: center; letter-spacing: -.2px; }
.red { width: 66px; color: #dc3545; border-color: #e8808a; }
.blue { width: 71px; color: #2b74f0; border-color: #6fa6fa; }

.second { height: 330px; }
.app { width: 1019px; height: 340px; transform: scaleX(.8); transform-origin: 0 0; display: flex; background: #fff; font-size: 10px; letter-spacing: -.2px; color: #5f666d; }
.side2 { width: 161px; background: #343a40; color: #c2c7d0; flex: none; overflow: hidden; box-shadow: 2px 0 4px #999; position: relative; }
.brand { height: 47px; border-bottom: 1px solid #4b545c; padding: 6px 0 0 13px; display: flex; }
.logo { width: 82px; height: 20px; background: #f1f1f4; display: flex; align-items: center; padding-left: 2px; flex: none; color: #2f2c96; font-size: 5.200px; line-height: 5px; letter-spacing: -.1px; box-shadow: 0 3px 6px #1a1d20; }
.logo div { margin-left: 3px; white-space: nowrap; }
.logo b { display: block; font-family: "Liberation Serif", serif; font-size: 6px; }
.logo small { display: block; font-size: 3px; line-height: 3px; }
.leap { margin: 6px 0 0 5px; height: 22px; line-height: 21px; white-space: nowrap; font-size: 12.500px; color: #fff; border-bottom: 1px solid #ddd; letter-spacing: 0; }
.leap i { font-style: normal; }
.c1 { color: #e02020; } .c2 { color: #1e6fe0; } .c3 { color: #0bb32b; font-size: 20px; } .c4 { color: #f29a1c; }
.admin { height: 40px; margin: 0 5px; border-bottom: 1px solid #4b545c; display: flex; align-items: center; gap: 7px; padding-left: 8px; }
.admin b { text-decoration: underline; letter-spacing: 0; font-size: 9.800px; }
.menu { padding: 11px 5px 0; }
.menu span { display: flex; align-items: center; height: 24px; margin-bottom: 2px; padding-left: 9px; gap: 12px; fill: #088208; border-radius: 3px; white-space: nowrap; }
.menu .top { background: #494e53; color: #fff; }
.menu .chev { margin-left: auto; margin-right: 9px; }
.menu .on { background: #e9ebec; color: #495057; }
.content { flex: 1; }
.topnav { height: 34px; border-bottom: 1px solid #e3e5e8; display: flex; align-items: center; padding-left: 5px; color: #999; }
.topnav span { margin-left: 10px; }
.topnav > svg:first-child { margin-top: -6px; }
.find { margin-left: auto; width: 134px; height: 23px; border: 1px solid #dfe1e5; padding-left: 8px; line-height: 22px; }
.topnav > svg:last-child { margin: 0 10px 0 9px; }
.card { margin: 5px 3px 0 4px; border: 1px solid #e6e6e9; height: 320px; padding: 0 0 0 12px; }
.cardhead { height: 47px; display: flex; align-items: center; justify-content: space-between; border-bottom: 1px solid #e6e6e6; margin: 0 5px 0 -8px; padding: 0 7px 0 8px; color: #222; font-size: 12px; letter-spacing: 0; }
.add { width: 71px; height: 24px; border: 1px solid #7cbf9e; border-radius: 4px; color: #3b9469; font-size: 10px; line-height: 22px; text-align: center; letter-spacing: -.1px; white-space: nowrap; }
.tools { display: flex; align-items: center; height: 44px; padding: 10px 0 0; color: #222; gap: 3px; margin-right: 12px; }
.num { width: 40px; height: 20px; border: 1px solid #c5c8cc; border-radius: 2px; display: flex; align-items: center; justify-content: space-between; padding: 0 4px 0 5px; color: #555; }
.tools b, .app th { font-weight: 700; letter-spacing: -.25px; }
.sl { margin-left: auto; }
.box { width: 127px; height: 22px; border: 1px solid #c5c8cc; border-radius: 2px; }
.app table { width: 824px; table-layout: fixed; border-collapse: collapse; }
.w1 { width: 94px; } .w2 { width: 157px; } .w3 { width: 150px; } .w4 { width: 166px; } .w5 { width: 96px; } .w6 { width: 161px; }
.app th { height: 25px; padding: 0 8px 0 7px; border: 1px solid #dee2e6; border-bottom-color: #c8ccd0; color: #212529; text-align: left; }
.app th div { display: flex; justify-content: space-between; align-items: center; fill: #d5d8db; }
.app th .asc { fill: #888; }
.app td { height: 27.500px; padding: 0 0 5px 7px; border: solid #e6e8eb; border-width: 0 1px; white-space: nowrap; }
.app td.ok { color: #2a8a2a; }
.ok svg { display: inline-block; margin-right: 3px; vertical-align: -1px; }
.acts { display: flex; align-items: center; gap: 3px; height: 15px; margin: 4px 0 0 -1px; }
.acts svg:last-child { margin-left: 1px; }

.scroll { width: 26px; background: #f0f0f0; display: flex; flex-direction: column; padding-top: 1px; fill: #777; }
.sb, .thumb { width: 25px; height: 25px; border: 1px solid #ababab; background: #fff; display: flex; align-items: center; justify-content: center; }
.thumb { margin-top: 641px; }
.thumb + .sb { margin-top: auto; margin-bottom: 1px; }

/* status bar */
.status { height: 33px; background: #2b579a; color: #fff; display: flex; justify-content: space-between; font-size: 15.500px; letter-spacing: -.15px; white-space: nowrap; }
.stleft { display: grid; grid-template-columns: 126px 116px 40px 220px; padding-left: 7px; align-items: center; height: 31px; }
.views { display: grid; grid-template-columns: 32px 58px 38px 15px 156px 29px 50px; align-items: center; height: 32px; }
.cur { width: 45px; height: 33px; background: #19478a; display: flex; align-items: center; justify-content: center; margin-top: 1px; }
.track { width: 150px; height: 16px; display: flex; align-items: center; background: linear-gradient(#fff, #fff) 0 50%/150px 1px no-repeat, linear-gradient(#fff, #fff) 75px 50%/1px 7px no-repeat; }
.track i { width: 6px; height: 16px; background: #fff; margin-left: 65px; }

/* taskbar */
.taskbar { height: 60px; display: flex; justify-content: space-between; background: linear-gradient(90deg, #d7e6ed 0, #d5e5ea 900px, #d3e6e9 1080px, #d3e0e8 1300px, #d9dbda 1380px, #dcd9d1 1430px, #d8dcdc 1490px, #d2e0e8 1540px, #d0e1e8 100%); }
.apps { display: grid; grid-template-columns: 72px 72px 72px 72px 79px 75px 75px 75px 75px 75px 75px 75px 75px; }
.apps span { display: flex; align-items: center; justify-content: center; position: relative; }
.apps .run::after { content: ""; position: absolute; bottom: 0; left: 7px; right: 7px; height: 3px; background: #0078d7; }
.apps .active { background: linear-gradient(#edf3f6, #edf3f6) 50% 0/73px 60px no-repeat; }
.apps .active::after { left: 1px; right: 1px; }
.badge { font-size: 14px; fill: #fff; }
.tray { display: grid; grid-template-columns: 50px 43px 48px 52px 42px 54px 122px 55px 7px; align-items: center; color: #111; font-size: 17px; letter-spacing: -.5px; }
.clock { display: flex; flex-direction: column; align-items: center; width: 94px; line-height: 28px; white-space: nowrap; }
.date { letter-spacing: .35px; }
.peek { width: 1px; height: 60px; background: #a0b2bc; }
```
